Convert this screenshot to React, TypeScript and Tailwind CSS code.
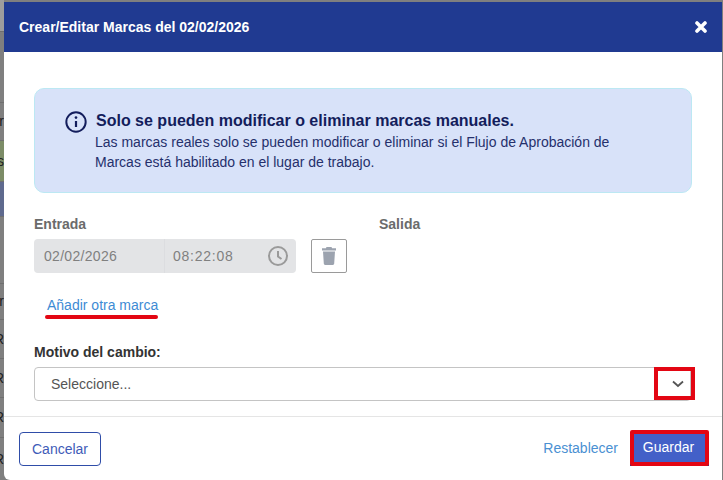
const stripRows = [
  { h: "h-[38px]", bg: "bg-[#7f7f7f]", text: "r" },
  { h: "h-[41px]", bg: "bg-[#7c8c67]", text: "s" },
  { h: "h-[35px]", bg: "bg-[#5f6a8e]", text: "" },
  { h: "h-[67px]", bg: "bg-[#7f7f7f]", text: "" },
  { h: "h-[36px]", bg: "bg-[#7f7f7f]", text: "r" },
  { h: "h-[39px]", bg: "bg-[#7f7f7f]", text: "R" },
  { h: "h-[39px]", bg: "bg-[#7f7f7f]", text: "R" },
  { h: "h-[40px]", bg: "bg-[#7f7f7f]", text: "R" },
  { h: "h-[43px]", bg: "bg-[#7f7f7f]", text: "R" },
];

export default function App() {
  return (
    <div className="flex h-[480px] w-[723px] overflow-hidden bg-[#7f7f7f] pt-[2px] pr-[1px] font-['Liberation_Sans',Arial,sans-serif]">
      {/* page behind the backdrop */}
      <div className="-mt-[2px] flex w-[4px] shrink-0 flex-col overflow-hidden">
        <div className="h-[32px] shrink-0 border-b border-[#6f6f6f] bg-[#9d9d9d]" />
        <div className="h-[71px] shrink-0 border-b border-[#6f6f6f]" />
        {stripRows.map((row, i) => (
          <div key={i} className={`${row.h} ${row.bg} flex shrink-0 items-center justify-end border-b border-[#6f6f6f] text-[14px] whitespace-nowrap text-[#222222]`}>
            {row.text}
          </div>
        ))}
      </div>

      <div className="relative flex flex-1 flex-col overflow-hidden rounded-bl-[6px] bg-white">
        <div className="flex h-[50px] shrink-0 items-center justify-between bg-[#203a91] pr-[15px] pl-[15px]">
          <h1 className="text-[14px] font-bold text-white">Crear/Editar Marcas del 02/02/2026</h1>
          <svg viewBox="0 0 12 12" className="h-[12px] w-[12px]" fill="none" stroke="#ffffff" strokeWidth="3.6" strokeLinecap="round">
            <path d="M2 2l8 8M10 2l-8 8" />
          </svg>
        </div>

        <div className="flex-1 px-[30px] pt-[36px]">
          <div className="flex h-[105px] w-[658px] rounded-[10px] border border-[#bce8f3] bg-[#d8e2f9] pt-[21px] pl-[30px]">
            <svg viewBox="0 0 20 20" className="mt-[1px] h-[22px] w-[22px] shrink-0" fill="none" stroke="#131d5c" strokeWidth="1.8">
              <circle cx="10" cy="10" r="8.8" />
              <path d="M10 9v5.5" strokeWidth="2" />
              <circle cx="10" cy="6" r="1.2" fill="#131d5c" stroke="none" />
            </svg>
            <div className="ml-[9px] w-[530px]">
              <p className="text-[16px] leading-[22px] font-bold text-[#131d5c]">
                Solo se pueden modificar o eliminar marcas manuales.
              </p>
              <p className="-ml-px text-[14px] leading-[20px] text-[#25306c]">
                Las marcas reales solo se pueden modificar o eliminar si el Flujo de Aprobación de Marcas está habilitado en el lugar de trabajo.
              </p>
            </div>
          </div>

          <div className="mt-[22px] flex">
            <div className="w-[345px]">
              <label className="block text-[14px] leading-[18px] font-bold text-[#6b6b6b]">Entrada</label>
              <div className="mt-[6px] flex items-start">
                <div className="flex h-[34px] w-[262px] items-center rounded-[4px] bg-[#e3e4e6] text-[14px] text-[#808080]">
                  <span className="w-[131px] border-r border-[#dcdde0] pl-[10px] leading-[34px] tracking-[0.3px]">02/02/2026</span>
                  <span className="w-[103px] pl-[8px] tracking-[0.75px]">08:22:08</span>
                  <svg viewBox="0 0 20 20" className="h-[20px] w-[20px]" fill="none" stroke="#9a9a9a" strokeWidth="2">
                    <circle cx="10" cy="10" r="9" />
                    <path d="M10 5v5.5l3.5 2.5" />
                  </svg>
                </div>
                <button className="ml-[15px] flex h-[34px] w-[36px] items-center justify-center rounded-[2px] border border-[#9a9a9a] bg-white">
                  <svg viewBox="0 0 14 18" className="h-[18px] w-[14px]" fill="#9ca3af">
                    <path d="M4.5 0h5l.6 1.2H14v2.2H0V1.2h3.9z" />
                    <path d="M1 4.4h12l-.8 12.2c0 .8-.6 1.4-1.4 1.4H3.2c-.8 0-1.4-.6-1.4-1.4z" />
                  </svg>
                </button>
              </div>
            </div>
            <label className="block text-[14px] leading-[18px] font-bold text-[#6b6b6b]">Salida</label>
          </div>

          <a className="mt-[23px] ml-[13px] block text-[14px] leading-[18px] text-[#3d8bd4]">Añadir otra marca</a>

          <label className="mt-[29px] block text-[14px] leading-[18px] font-bold text-[#333333]">Motivo del cambio:</label>
          <div className="mt-[6px] flex h-[34px] w-[657px] items-center justify-between rounded-[4px] border border-[#c4c4c4] pr-[6px] pl-[16px] text-[14px] text-[#555555]">
            <span>Seleccione...</span>
            <svg viewBox="0 0 12 8" className="h-[8px] w-[12px]" fill="none" stroke="#555555" strokeWidth="1.8">
              <path d="M1 1.5l5 4.5 5-4.5" />
            </svg>
          </div>
        </div>

        <div className="flex h-[64px] shrink-0 items-center justify-between border-t border-[#e5e5e5] pr-[13px] pl-[15px]">
          <button className="h-[34px] w-[82px] rounded-[4px] border border-[#2f4da8] pt-px text-[14px] text-[#3f5cb8]">Cancelar</button>
          <div className="flex items-center">
            <a className="text-[14px] text-[#4a90d2]">Restablecer</a>
            <button className="ml-[12px] h-[34px] w-[79px] border-b-2 border-[#203a91] bg-[#4360c8] pr-[2px] text-[14px] text-white">Guardar</button>
          </div>
        </div>

        {/* red annotations over the screenshot */}
        <div className="absolute top-[313px] left-[41px] h-[4px] w-[113px] rounded-full bg-[#e30613]" />
        <div className="absolute top-[365px] left-[650px] h-[33px] w-[41px] border-[4px] border-[#e30613]" />
        <div className="absolute top-[428px] left-[626px] h-[36px] w-[79px] rounded-[2px] border-[4px] border-[#e30613]" />
      </div>
    </div>
  );
}
